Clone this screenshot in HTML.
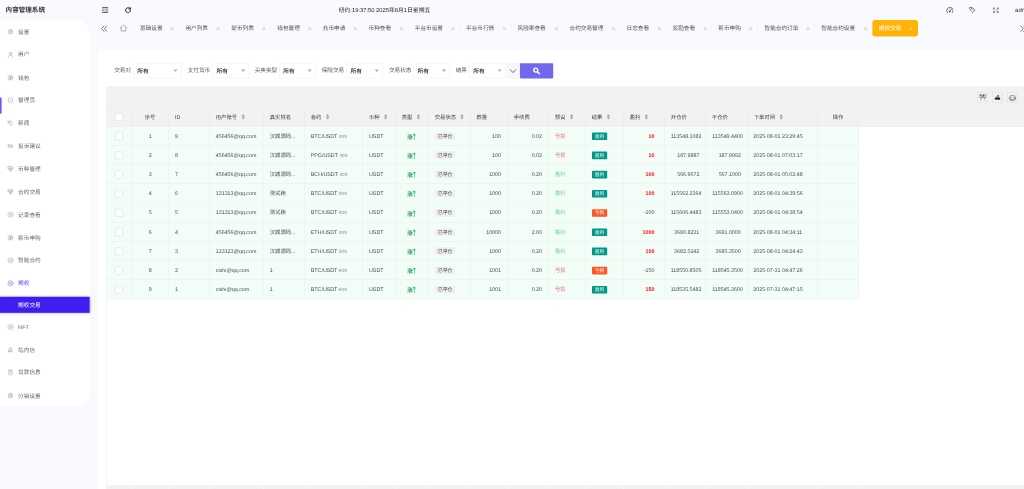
<!DOCTYPE html>
<html lang="zh-CN"><head><meta charset="utf-8"><title>内容管理系统</title>
<style>
html,body{margin:0;padding:0;width:1024px;height:489px;overflow:hidden;background:#f8fafe;}
#app{position:absolute;left:0;top:0;width:2560px;height:1222.5px;transform:scale(0.4);transform-origin:0 0;overflow:hidden;will-change:opacity;
font-family:"Liberation Sans","Noto Sans CJK SC",sans-serif;text-rendering:geometricPrecision;}
.t{position:absolute;white-space:nowrap;}
.b{position:absolute;}
</style></head><body><div id="app">
<div class="t" style="left:14.00px;top:12.25px;line-height:25.00px;font-size:16.40px;color:#333;font-weight:bold;">内容管理系统</div>
<div class="b" style="left:0.00px;top:50.00px;width:224.00px;height:966.00px;background:#fff;border-radius:0 33.75px 33.75px 0;"></div>
<svg class="b" style="left:17.75px;top:71.38px;width:16.50px;height:16.50px;stroke:#8a8894;stroke-width:1.6;" viewBox="0 0 24 24" fill="none" stroke-linecap="round" stroke-linejoin="round"><circle cx="12" cy="12" r="3.2"/><path d="M12 2.5l2 2.6 3.2-.6.9 3.1 3 1.3-1.2 3.1 1.2 3.1-3 1.3-.9 3.1-3.2-.6-2 2.6-2-2.6-3.2.6-.9-3.1-3-1.3 1.2-3.1-1.2-3.1 3-1.3.9-3.1 3.2.6z"/></svg>
<div class="t" style="left:45.25px;top:67.62px;line-height:25.00px;font-size:14.12px;color:#696772;font-weight:normal;">设置</div>
<svg class="b" style="left:17.75px;top:128.00px;width:16.50px;height:16.50px;stroke:#8a8894;stroke-width:1.6;" viewBox="0 0 24 24" fill="none" stroke-linecap="round" stroke-linejoin="round"><circle cx="12" cy="8" r="4.5"/><path d="M4 21c.8-4.6 3.8-7 8-7s7.200 2.400 8 7"/></svg>
<div class="t" style="left:45.25px;top:124.25px;line-height:25.00px;font-size:14.12px;color:#696772;font-weight:normal;">用户</div>
<svg class="b" style="left:17.75px;top:185.50px;width:16.50px;height:16.50px;stroke:#8a8894;stroke-width:1.6;" viewBox="0 0 24 24" fill="none" stroke-linecap="round" stroke-linejoin="round"><circle cx="12" cy="12" r="9"/><path d="M9 7l3 4 3-4M12 11v7M9 12.500h6M9 15.500h6"/></svg>
<div class="t" style="left:45.25px;top:181.75px;line-height:25.00px;font-size:14.12px;color:#696772;font-weight:normal;">钱包</div>
<svg class="b" style="left:17.75px;top:242.62px;width:16.50px;height:16.50px;stroke:#8a8894;stroke-width:1.6;" viewBox="0 0 24 24" fill="none" stroke-linecap="round" stroke-linejoin="round"><path d="M12 2.500l8 3v6.500c0 5-3.500 8-8 9.500-4.500-1.500-8-4.500-8-9.500V5.500z"/><path d="M8 11c1 2 7 2 8 0"/></svg>
<div class="t" style="left:45.25px;top:238.88px;line-height:25.00px;font-size:14.12px;color:#696772;font-weight:normal;">管理员</div>
<svg class="b" style="left:17.75px;top:299.75px;width:16.50px;height:16.50px;stroke:#8a8894;stroke-width:1.6;" viewBox="0 0 24 24" fill="none" stroke-linecap="round" stroke-linejoin="round"><path d="M3 4.500l9-1.500 9.500 9.500-8 8L4 11z" /><circle cx="8.500" cy="8.500" r="1.600"/></svg>
<div class="t" style="left:45.25px;top:296.00px;line-height:25.00px;font-size:14.12px;color:#696772;font-weight:normal;">新闻</div>
<svg class="b" style="left:17.75px;top:357.00px;width:16.50px;height:16.50px;stroke:#8a8894;stroke-width:1.6;" viewBox="0 0 24 24" fill="none" stroke-linecap="round" stroke-linejoin="round"><rect x="2.500" y="8" width="19" height="8" rx="2" stroke-width="1.500"/><path d="M7 12h.1M12 12h.1M17 12h.1" stroke-width="2.400"/></svg>
<div class="t" style="left:45.25px;top:353.25px;line-height:25.00px;font-size:14.12px;color:#696772;font-weight:normal;">投诉建议</div>
<svg class="b" style="left:17.75px;top:414.00px;width:16.50px;height:16.50px;stroke:#8a8894;stroke-width:1.6;" viewBox="0 0 24 24" fill="none" stroke-linecap="round" stroke-linejoin="round"><path d="M6 3h12l4 6-10 12L2 9z"/><path d="M2 9h20M9 9l3 11 3-11"/></svg>
<div class="t" style="left:45.25px;top:410.25px;line-height:25.00px;font-size:14.12px;color:#696772;font-weight:normal;">币种管理</div>
<svg class="b" style="left:17.75px;top:471.00px;width:16.50px;height:16.50px;stroke:#8a8894;stroke-width:1.6;" viewBox="0 0 24 24" fill="none" stroke-linecap="round" stroke-linejoin="round"><path d="M6 3h12l4 6-10 12L2 9z"/><path d="M2 9h20M9 9l3 11 3-11"/></svg>
<div class="t" style="left:45.25px;top:467.25px;line-height:25.00px;font-size:14.12px;color:#696772;font-weight:normal;">合约交易</div>
<svg class="b" style="left:17.75px;top:528.25px;width:16.50px;height:16.50px;stroke:#8a8894;stroke-width:1.6;" viewBox="0 0 24 24" fill="none" stroke-linecap="round" stroke-linejoin="round"><circle cx="12" cy="12" r="9.500" stroke-width="1.500"/><path d="M15 9c-2.500-1.500-5.500 0-5.500 3s3 4.500 5.500 3M7.500 12h4.500" stroke-width="1.400"/></svg>
<div class="t" style="left:45.25px;top:524.50px;line-height:25.00px;font-size:14.12px;color:#696772;font-weight:normal;">记录查看</div>
<svg class="b" style="left:17.75px;top:585.50px;width:16.50px;height:16.50px;stroke:#8a8894;stroke-width:1.6;" viewBox="0 0 24 24" fill="none" stroke-linecap="round" stroke-linejoin="round"><circle cx="12" cy="12" r="9"/><path d="M9 7l3 4 3-4M12 11v7M9 12.500h6M9 15.500h6"/></svg>
<div class="t" style="left:45.25px;top:581.75px;line-height:25.00px;font-size:14.12px;color:#696772;font-weight:normal;">新币申购</div>
<svg class="b" style="left:17.75px;top:642.75px;width:16.50px;height:16.50px;stroke:#8a8894;stroke-width:1.6;" viewBox="0 0 24 24" fill="none" stroke-linecap="round" stroke-linejoin="round"><circle cx="12" cy="12" r="9.500" stroke-width="1.500"/><path d="M15 9c-2.500-1.500-5.500 0-5.500 3s3 4.500 5.500 3M7.500 12h4.500" stroke-width="1.400"/></svg>
<div class="t" style="left:45.25px;top:639.00px;line-height:25.00px;font-size:14.12px;color:#696772;font-weight:normal;">智能合约</div>
<svg class="b" style="left:17.75px;top:700.12px;width:16.50px;height:16.50px;stroke:#5a3df0;stroke-width:1.6;" viewBox="0 0 24 24" fill="none" stroke-linecap="round" stroke-linejoin="round"><circle cx="12" cy="12" r="9.500" stroke-width="1.500"/><path d="M15 9c-2.500-1.500-5.500 0-5.500 3s3 4.500 5.500 3M7.500 12h4.500" stroke-width="1.400"/></svg>
<div class="t" style="left:45.25px;top:696.38px;line-height:25.00px;font-size:14.12px;color:#5a3df0;font-weight:normal;">期权</div>
<svg class="b" style="left:17.75px;top:808.88px;width:16.50px;height:16.50px;stroke:#8a8894;stroke-width:1.6;" viewBox="0 0 24 24" fill="none" stroke-linecap="round" stroke-linejoin="round"><circle cx="12" cy="12" r="9.500" stroke-width="1.500"/><path d="M15 9c-2.500-1.500-5.500 0-5.500 3s3 4.500 5.500 3M7.500 12h4.500" stroke-width="1.400"/></svg>
<div class="t" style="left:45.25px;top:805.12px;line-height:25.00px;font-size:14.12px;color:#696772;font-weight:normal;">NFT</div>
<svg class="b" style="left:17.75px;top:866.00px;width:16.50px;height:16.50px;stroke:#6f6d78;stroke-width:1.6;" viewBox="0 0 24 24" fill="none" stroke-linecap="round" stroke-linejoin="round"><path d="M5 17h14l-2-3V10a5 5 0 0 0-10 0v4zM10 20h4"/></svg>
<div class="t" style="left:45.25px;top:862.25px;line-height:25.00px;font-size:14.12px;color:#696772;font-weight:normal;">站内信</div>
<svg class="b" style="left:17.75px;top:923.00px;width:16.50px;height:16.50px;stroke:#a5a3ad;stroke-width:1.6;" viewBox="0 0 24 24" fill="none" stroke-linecap="round" stroke-linejoin="round"><rect x="5" y="4" width="14" height="17" rx="1.500"/><path d="M9 3h6v3H9zM9 11h6M9 15h6"/></svg>
<div class="t" style="left:45.25px;top:919.25px;line-height:25.00px;font-size:14.12px;color:#696772;font-weight:normal;">贷款信息</div>
<svg class="b" style="left:17.75px;top:980.50px;width:16.50px;height:16.50px;stroke:#8a8894;stroke-width:1.6;" viewBox="0 0 24 24" fill="none" stroke-linecap="round" stroke-linejoin="round"><circle cx="12" cy="12" r="3.2"/><path d="M12 2.5l2 2.6 3.2-.6.9 3.1 3 1.3-1.2 3.1 1.2 3.1-3 1.3-.9 3.1-3.2-.6-2 2.6-2-2.6-3.2.6-.9-3.1-3-1.3 1.2-3.1-1.2-3.1 3-1.3.9-3.1 3.2.6z"/></svg>
<div class="t" style="left:45.25px;top:976.75px;line-height:25.00px;font-size:14.12px;color:#696772;font-weight:normal;">分销设置</div>
<div class="b" style="left:0.00px;top:244.38px;width:3.75px;height:40.00px;background:#6f55f5;"></div>
<div class="b" style="left:0.00px;top:742.25px;width:224.38px;height:40.00px;background:#3f1ff0;box-shadow:0 0 6.00px rgba(63,31,240,.45);"></div>
<div class="t" style="left:45.25px;top:750.00px;line-height:25.00px;font-size:14.12px;color:#fff;font-weight:normal;">期权交易</div>
<svg class="b" style="left:253.75px;top:16.00px;width:18.00px;height:18.00px;stroke:#222;" viewBox="0 0 24 24" fill="none" stroke-linecap="round" stroke-linejoin="round"><path d="M2 4.500h20M2 19.500h20" stroke-width="3" stroke-linecap="butt"/><path d="M10.500 12h11.500" stroke-width="2.200" stroke-linecap="butt"/><path d="M3 9.200v5.600l3.800-2.800z" fill="#222" stroke-width="0.500"/></svg>
<svg class="b" style="left:311.00px;top:16.25px;width:18.50px;height:18.50px;stroke:#222;" viewBox="0 0 24 24" fill="none" stroke-linecap="round" stroke-linejoin="round"><path d="M20 12.500a8 8 0 1 1-3-6.700" stroke-width="3.200"/><path d="M20.500 2.500v7h-7z" fill="#222" stroke-width="1"/></svg>
<div class="t" style="left:711.25px;width:500.00px;text-align:center;top:12.50px;line-height:25.00px;font-size:14.50px;color:#222;font-weight:normal;">纽约:19:37:50 2025年8月1日星期五</div>
<svg class="b" style="left:2364.62px;top:15.50px;width:19.50px;height:19.50px;stroke:#444;" viewBox="0 0 24 24" fill="none" stroke-linecap="round" stroke-linejoin="round"><path d="M4.500 19.500A10 10 0 1 1 19.500 19.500" stroke-width="2.200"/><path d="M11.500 15.500L17 9" stroke-width="2.200"/><circle cx="11" cy="16" r="1.800" fill="#333" stroke-width="1"/><path d="M7 11l.1.100M12 7.500v.1" stroke-width="1.800"/></svg>
<svg class="b" style="left:2422.25px;top:16.00px;width:18.00px;height:18.00px;stroke:#444;" viewBox="0 0 24 24" fill="none" stroke-linecap="round" stroke-linejoin="round"><path d="M3 4l8-1 10 10-7.500 7.500L3.500 11z" stroke-width="2"/><path d="M6.500 3.500L17 14" stroke-width="1.500"/><circle cx="8" cy="8" r="1.300"/></svg>
<svg class="b" style="left:2480.88px;top:17.75px;width:17.00px;height:15.00px;stroke:#505050;" viewBox="0 0 24 24" preserveAspectRatio="none" fill="none" stroke-linecap="round" stroke-linejoin="round"><path d="M3 8V3h5M16 3h5v5M21 16v5h-5M8 21H3v-5" stroke-width="2.200"/><path d="M4 4l5 5M20 4l-5 5M20 20l-5-5M4 20l5-5" stroke-width="2"/></svg>
<div class="t" style="left:2537.75px;top:13.00px;line-height:25.00px;font-size:15.00px;color:#333;font-weight:normal;">admin</div>
<svg class="b" style="left:251.50px;top:62.50px;width:17.00px;height:17.25px;stroke:#3a3a3a;" viewBox="0 0 24 24" preserveAspectRatio="none" fill="none" stroke-linecap="round" stroke-linejoin="round"><path d="M11 2.500l-8 9.500 8 9.500M21 2.500l-8 9.500 8 9.500" stroke-width="2.300"/></svg>
<div class="b" style="left:280.25px;top:50.00px;width:1.00px;height:41.00px;background:#f0f1f6;"></div>
<svg class="b" style="left:299.25px;top:60.12px;width:19.50px;height:19.50px;stroke:#6a6a6a;" viewBox="0 0 24 24" fill="none" stroke-linecap="round" stroke-linejoin="round"><path d="M1.500 12.500L12 3l10.500 9.500" stroke-width="1.600"/><path d="M5 11.500V21.500h14V11.500" stroke-width="1.600"/></svg>
<div class="b" style="left:333.00px;top:50.00px;width:1.00px;height:41.00px;background:#f0f1f6;"></div>
<div class="t" style="left:350.00px;top:58.50px;line-height:25.00px;font-size:14.12px;color:#54525c;font-weight:normal;">基础设置</div>
<div class="t" style="left:180.00px;width:500.00px;text-align:center;top:59.38px;line-height:25.00px;font-size:18.00px;color:#c6c6ce;font-weight:normal;">×</div>
<div class="b" style="left:446.50px;top:50.00px;width:1.00px;height:41.00px;background:#f0f1f6;"></div>
<div class="t" style="left:463.50px;top:58.50px;line-height:25.00px;font-size:14.12px;color:#54525c;font-weight:normal;">用户列表</div>
<div class="t" style="left:295.00px;width:500.00px;text-align:center;top:59.38px;line-height:25.00px;font-size:18.00px;color:#c6c6ce;font-weight:normal;">×</div>
<div class="b" style="left:561.12px;top:50.00px;width:1.00px;height:41.00px;background:#f0f1f6;"></div>
<div class="t" style="left:578.12px;top:58.50px;line-height:25.00px;font-size:14.12px;color:#54525c;font-weight:normal;">提币列表</div>
<div class="t" style="left:409.38px;width:500.00px;text-align:center;top:59.38px;line-height:25.00px;font-size:18.00px;color:#c6c6ce;font-weight:normal;">×</div>
<div class="b" style="left:676.12px;top:50.00px;width:1.00px;height:41.00px;background:#f0f1f6;"></div>
<div class="t" style="left:693.12px;top:58.50px;line-height:25.00px;font-size:14.12px;color:#54525c;font-weight:normal;">钱包管理</div>
<div class="t" style="left:523.75px;width:500.00px;text-align:center;top:59.38px;line-height:25.00px;font-size:18.00px;color:#c6c6ce;font-weight:normal;">×</div>
<div class="b" style="left:789.88px;top:50.00px;width:1.00px;height:41.00px;background:#f0f1f6;"></div>
<div class="t" style="left:806.88px;top:58.50px;line-height:25.00px;font-size:14.12px;color:#54525c;font-weight:normal;">充币申请</div>
<div class="t" style="left:638.00px;width:500.00px;text-align:center;top:59.38px;line-height:25.00px;font-size:18.00px;color:#c6c6ce;font-weight:normal;">×</div>
<div class="b" style="left:904.25px;top:50.00px;width:1.00px;height:41.00px;background:#f0f1f6;"></div>
<div class="t" style="left:921.25px;top:58.50px;line-height:25.00px;font-size:14.12px;color:#54525c;font-weight:normal;">币种查看</div>
<div class="t" style="left:752.50px;width:500.00px;text-align:center;top:59.38px;line-height:25.00px;font-size:18.00px;color:#c6c6ce;font-weight:normal;">×</div>
<div class="b" style="left:1019.88px;top:50.00px;width:1.00px;height:41.00px;background:#f0f1f6;"></div>
<div class="t" style="left:1036.88px;top:58.50px;line-height:25.00px;font-size:14.12px;color:#54525c;font-weight:normal;">平台币设置</div>
<div class="t" style="left:882.50px;width:500.00px;text-align:center;top:59.38px;line-height:25.00px;font-size:18.00px;color:#c6c6ce;font-weight:normal;">×</div>
<div class="b" style="left:1148.00px;top:50.00px;width:1.00px;height:41.00px;background:#f0f1f6;"></div>
<div class="t" style="left:1165.00px;top:58.50px;line-height:25.00px;font-size:14.12px;color:#54525c;font-weight:normal;">平台币行情</div>
<div class="t" style="left:1010.62px;width:500.00px;text-align:center;top:59.38px;line-height:25.00px;font-size:18.00px;color:#c6c6ce;font-weight:normal;">×</div>
<div class="b" style="left:1276.75px;top:50.00px;width:1.00px;height:41.00px;background:#f0f1f6;"></div>
<div class="t" style="left:1293.75px;top:58.50px;line-height:25.00px;font-size:14.12px;color:#54525c;font-weight:normal;">风险率查看</div>
<div class="t" style="left:1140.62px;width:500.00px;text-align:center;top:59.38px;line-height:25.00px;font-size:18.00px;color:#c6c6ce;font-weight:normal;">×</div>
<div class="b" style="left:1406.75px;top:50.00px;width:1.00px;height:41.00px;background:#f0f1f6;"></div>
<div class="t" style="left:1423.75px;top:58.50px;line-height:25.00px;font-size:14.12px;color:#54525c;font-weight:normal;">合约交易管理</div>
<div class="t" style="left:1283.12px;width:500.00px;text-align:center;top:59.38px;line-height:25.00px;font-size:18.00px;color:#c6c6ce;font-weight:normal;">×</div>
<div class="b" style="left:1549.25px;top:50.00px;width:1.00px;height:41.00px;background:#f0f1f6;"></div>
<div class="t" style="left:1566.25px;top:58.50px;line-height:25.00px;font-size:14.12px;color:#54525c;font-weight:normal;">日志查看</div>
<div class="t" style="left:1398.12px;width:500.00px;text-align:center;top:59.38px;line-height:25.00px;font-size:18.00px;color:#c6c6ce;font-weight:normal;">×</div>
<div class="b" style="left:1664.25px;top:50.00px;width:1.00px;height:41.00px;background:#f0f1f6;"></div>
<div class="t" style="left:1681.25px;top:58.50px;line-height:25.00px;font-size:14.12px;color:#54525c;font-weight:normal;">奖励查看</div>
<div class="t" style="left:1512.50px;width:500.00px;text-align:center;top:59.38px;line-height:25.00px;font-size:18.00px;color:#c6c6ce;font-weight:normal;">×</div>
<div class="b" style="left:1778.62px;top:50.00px;width:1.00px;height:41.00px;background:#f0f1f6;"></div>
<div class="t" style="left:1795.62px;top:58.50px;line-height:25.00px;font-size:14.12px;color:#54525c;font-weight:normal;">新币申购</div>
<div class="t" style="left:1626.88px;width:500.00px;text-align:center;top:59.38px;line-height:25.00px;font-size:18.00px;color:#c6c6ce;font-weight:normal;">×</div>
<div class="b" style="left:1894.25px;top:50.00px;width:1.00px;height:41.00px;background:#f0f1f6;"></div>
<div class="t" style="left:1911.25px;top:58.50px;line-height:25.00px;font-size:14.12px;color:#54525c;font-weight:normal;">智能合约订单</div>
<div class="t" style="left:1770.00px;width:500.00px;text-align:center;top:59.38px;line-height:25.00px;font-size:18.00px;color:#c6c6ce;font-weight:normal;">×</div>
<div class="b" style="left:2036.12px;top:50.00px;width:1.00px;height:41.00px;background:#f0f1f6;"></div>
<div class="t" style="left:2053.12px;top:58.50px;line-height:25.00px;font-size:14.12px;color:#54525c;font-weight:normal;">智能合约设置</div>
<div class="t" style="left:1913.75px;width:500.00px;text-align:center;top:59.38px;line-height:25.00px;font-size:18.00px;color:#c6c6ce;font-weight:normal;">×</div>
<div class="b" style="left:2181.25px;top:49.75px;width:114.00px;height:41.00px;background:#ffb405;border-radius:6.50px;"></div>
<div class="t" style="left:2196.88px;top:58.50px;line-height:25.00px;font-size:14.12px;color:#fff;font-weight:normal;">期权交易</div>
<div class="t" style="left:2028.12px;width:500.00px;text-align:center;top:59.38px;line-height:25.00px;font-size:18.00px;color:#ffd98a;font-weight:normal;">×</div>
<div class="b" style="left:2535.75px;top:50.00px;width:1.00px;height:41.00px;background:#f0f1f6;"></div>
<svg class="b" style="left:2549.50px;top:63.00px;width:17.00px;height:17.25px;stroke:#3a3a3a;" viewBox="0 0 24 24" preserveAspectRatio="none" fill="none" stroke-linecap="round" stroke-linejoin="round"><path d="M3 2.500l8 9.500-8 9.500M13 2.500l8 9.500-8 9.500" stroke-width="2.300"/></svg>
<div class="b" style="left:245.00px;top:126.75px;width:2330.00px;height:1110.75px;background:#fff;border-radius:5.00px;"></div>
<div class="t" style="left:285.62px;top:163.88px;line-height:25.00px;font-size:14.00px;color:#5c5c5c;font-weight:normal;">交易对</div>
<div class="b" style="left:333.12px;top:158.12px;width:121.25px;height:37.50px;background:#fff;border:1.00px solid #e9e9ee;border-radius:2.50px;box-sizing:border-box;"></div>
<div class="t" style="left:343.12px;top:166.50px;line-height:25.00px;font-size:14.38px;color:#222;font-weight:500;">所有</div>
<div class="b" style="left:434.12px;top:173.62px;border-left:5.00px solid transparent;border-right:5.00px solid transparent;border-top:6.50px solid #adadad;"></div>
<div class="t" style="left:469.38px;top:163.88px;line-height:25.00px;font-size:14.00px;color:#5c5c5c;font-weight:normal;">支付货币</div>
<div class="b" style="left:531.25px;top:158.12px;width:91.88px;height:37.50px;background:#fff;border:1.00px solid #e9e9ee;border-radius:2.50px;box-sizing:border-box;"></div>
<div class="t" style="left:541.25px;top:166.50px;line-height:25.00px;font-size:14.38px;color:#222;font-weight:500;">所有</div>
<div class="b" style="left:602.88px;top:173.62px;border-left:5.00px solid transparent;border-right:5.00px solid transparent;border-top:6.50px solid #adadad;"></div>
<div class="t" style="left:636.75px;top:163.88px;line-height:25.00px;font-size:14.00px;color:#5c5c5c;font-weight:normal;">买卖类型</div>
<div class="b" style="left:698.12px;top:158.12px;width:90.62px;height:37.50px;background:#fff;border:1.00px solid #e9e9ee;border-radius:2.50px;box-sizing:border-box;"></div>
<div class="t" style="left:708.12px;top:166.50px;line-height:25.00px;font-size:14.38px;color:#222;font-weight:500;">所有</div>
<div class="b" style="left:768.50px;top:173.62px;border-left:5.00px solid transparent;border-right:5.00px solid transparent;border-top:6.50px solid #adadad;"></div>
<div class="t" style="left:804.38px;top:163.88px;line-height:25.00px;font-size:14.00px;color:#5c5c5c;font-weight:normal;">保险交易</div>
<div class="b" style="left:866.25px;top:158.12px;width:90.62px;height:37.50px;background:#fff;border:1.00px solid #e9e9ee;border-radius:2.50px;box-sizing:border-box;"></div>
<div class="t" style="left:876.25px;top:166.50px;line-height:25.00px;font-size:14.38px;color:#222;font-weight:500;">所有</div>
<div class="b" style="left:936.62px;top:173.62px;border-left:5.00px solid transparent;border-right:5.00px solid transparent;border-top:6.50px solid #adadad;"></div>
<div class="t" style="left:972.50px;top:163.88px;line-height:25.00px;font-size:14.00px;color:#5c5c5c;font-weight:normal;">交易状态</div>
<div class="b" style="left:1033.75px;top:158.12px;width:91.25px;height:37.50px;background:#fff;border:1.00px solid #e9e9ee;border-radius:2.50px;box-sizing:border-box;"></div>
<div class="t" style="left:1043.75px;top:166.50px;line-height:25.00px;font-size:14.38px;color:#222;font-weight:500;">所有</div>
<div class="b" style="left:1104.75px;top:173.62px;border-left:5.00px solid transparent;border-right:5.00px solid transparent;border-top:6.50px solid #adadad;"></div>
<div class="t" style="left:1139.38px;top:163.88px;line-height:25.00px;font-size:14.00px;color:#5c5c5c;font-weight:normal;">结果</div>
<div class="b" style="left:1173.12px;top:158.12px;width:90.62px;height:37.50px;background:#fff;border:1.00px solid #e9e9ee;border-radius:2.50px;box-sizing:border-box;"></div>
<div class="t" style="left:1183.12px;top:166.50px;line-height:25.00px;font-size:14.38px;color:#222;font-weight:500;">所有</div>
<div class="b" style="left:1243.50px;top:173.62px;border-left:5.00px solid transparent;border-right:5.00px solid transparent;border-top:6.50px solid #adadad;"></div>
<div class="b" style="left:1268.50px;top:158.12px;width:32.50px;height:37.50px;background:#f6f8fd;border:1.00px solid #e9e9ee;border-radius:2.50px;box-sizing:border-box;"></div>
<svg class="b" style="left:1273.00px;top:168.12px;width:19.00px;height:19.00px;stroke:#333;" viewBox="0 0 24 24" fill="none" stroke-linecap="round" stroke-linejoin="round"><path d="M3 7.500l9 9.500 9-9.500" stroke-width="2.200"/></svg>
<div class="b" style="left:1300.00px;top:157.50px;width:83.12px;height:38.25px;background:#7367f0;border-radius:2.00px;"></div>
<svg class="b" style="left:1331.00px;top:167.38px;width:20.00px;height:20.00px;stroke:#fff;" viewBox="0 0 24 24" fill="none" stroke-linecap="round" stroke-linejoin="round"><circle cx="10" cy="10" r="6" stroke-width="4.200"/><path d="M15.500 15.500l5.500 5.500" stroke-width="4.800"/></svg>
<div class="b" style="left:265.62px;top:215.88px;width:2309.38px;height:52.88px;background:#f2f2f2;"></div>
<div class="b" style="left:2443.00px;top:230.50px;width:26.75px;height:26.75px;background:transparent;border:1.00px solid #d8d8d8;box-sizing:border-box;"></div>
<div class="b" style="left:2480.25px;top:230.50px;width:26.75px;height:26.75px;background:transparent;border:1.00px solid #d8d8d8;box-sizing:border-box;"></div>
<div class="b" style="left:2517.50px;top:230.50px;width:26.75px;height:26.75px;background:transparent;border:1.00px solid #d8d8d8;box-sizing:border-box;"></div>
<svg class="b" style="left:2447.50px;top:235.25px;width:18.50px;height:18.50px;" viewBox="0 0 24 24" fill="none" stroke-linecap="round" stroke-linejoin="round"><rect x="2" y="3" width="9" height="8" rx="1.200" stroke-width="1.900" stroke="#333"/><rect x="13" y="3" width="9" height="8" rx="1.200" stroke-width="1.900" stroke="#333"/><path d="M6.500 14v7M17.500 14v7" stroke-width="5" stroke="#ababab" stroke-dasharray="2.600 1.400" stroke-linecap="butt"/></svg>
<svg class="b" style="left:2485.62px;top:235.75px;width:16.00px;height:16.00px;stroke:#222;" viewBox="0 0 24 24" fill="none" stroke-linecap="round" stroke-linejoin="round"><path d="M3 13h18v6H3z" fill="#222" stroke-width="1.500"/><path d="M7 13l3-7 5 2v5" stroke-width="2"/><path d="M12 4l4-1v3z" fill="#222" stroke-width="1"/></svg>
<svg class="b" style="left:2521.75px;top:235.50px;width:18.50px;height:18.50px;" viewBox="0 0 24 24" fill="none" stroke-linecap="round" stroke-linejoin="round"><ellipse cx="12" cy="12" rx="10.200" ry="8.800" stroke-width="1.700" stroke="#444"/><path d="M5 11.500h14v5H5z" stroke-width="1.500" stroke="#555" fill="#fff"/></svg>
<div class="b" style="left:265.62px;top:268.25px;width:2309.38px;height:48.50px;background:#f2f2f2;"></div>
<div class="b" style="left:265.62px;top:316.75px;width:1881.25px;height:431.37px;background:#f3fdf8;"></div>
<div class="b" style="left:265.00px;top:216.25px;width:1.25px;height:1021.25px;background:#e9e9e9;"></div>
<div class="b" style="left:265.62px;top:267.75px;width:2309.38px;height:1.00px;background:#e8e8e8;"></div>
<div class="b" style="left:265.62px;top:315.12px;width:2309.38px;height:1.00px;background:#e9e9e9;"></div>
<div class="b" style="left:265.62px;top:363.12px;width:1881.25px;height:1.00px;background:#e4eee9;"></div>
<div class="b" style="left:265.62px;top:411.13px;width:1881.25px;height:1.00px;background:#e4eee9;"></div>
<div class="b" style="left:265.62px;top:459.12px;width:1881.25px;height:1.00px;background:#e4eee9;"></div>
<div class="b" style="left:265.62px;top:507.13px;width:1881.25px;height:1.00px;background:#e4eee9;"></div>
<div class="b" style="left:265.62px;top:555.12px;width:1881.25px;height:1.00px;background:#e4eee9;"></div>
<div class="b" style="left:265.62px;top:603.12px;width:1881.25px;height:1.00px;background:#e4eee9;"></div>
<div class="b" style="left:265.62px;top:651.12px;width:1881.25px;height:1.00px;background:#e4eee9;"></div>
<div class="b" style="left:265.62px;top:699.13px;width:1881.25px;height:1.00px;background:#e4eee9;"></div>
<div class="b" style="left:265.62px;top:747.12px;width:1881.25px;height:1.00px;background:#e4eee9;"></div>
<div class="b" style="left:328.25px;top:268.25px;width:1.00px;height:48.50px;background:#e6e6e6;"></div>
<div class="b" style="left:328.25px;top:316.75px;width:1.00px;height:431.37px;background:#e4eee9;"></div>
<div class="b" style="left:421.38px;top:268.25px;width:1.00px;height:48.50px;background:#e6e6e6;"></div>
<div class="b" style="left:421.38px;top:316.75px;width:1.00px;height:431.37px;background:#e4eee9;"></div>
<div class="b" style="left:523.25px;top:268.25px;width:1.00px;height:48.50px;background:#e6e6e6;"></div>
<div class="b" style="left:523.25px;top:316.75px;width:1.00px;height:431.37px;background:#e4eee9;"></div>
<div class="b" style="left:658.25px;top:268.25px;width:1.00px;height:48.50px;background:#e6e6e6;"></div>
<div class="b" style="left:658.25px;top:316.75px;width:1.00px;height:431.37px;background:#e4eee9;"></div>
<div class="b" style="left:760.75px;top:268.25px;width:1.00px;height:48.50px;background:#e6e6e6;"></div>
<div class="b" style="left:760.75px;top:316.75px;width:1.00px;height:431.37px;background:#e4eee9;"></div>
<div class="b" style="left:906.38px;top:268.25px;width:1.00px;height:48.50px;background:#e6e6e6;"></div>
<div class="b" style="left:906.38px;top:316.75px;width:1.00px;height:431.37px;background:#e4eee9;"></div>
<div class="b" style="left:988.25px;top:268.25px;width:1.00px;height:48.50px;background:#e6e6e6;"></div>
<div class="b" style="left:988.25px;top:316.75px;width:1.00px;height:431.37px;background:#e4eee9;"></div>
<div class="b" style="left:1070.75px;top:268.25px;width:1.00px;height:48.50px;background:#e6e6e6;"></div>
<div class="b" style="left:1070.75px;top:316.75px;width:1.00px;height:431.37px;background:#e4eee9;"></div>
<div class="b" style="left:1175.12px;top:268.25px;width:1.00px;height:48.50px;background:#e6e6e6;"></div>
<div class="b" style="left:1175.12px;top:316.75px;width:1.00px;height:431.37px;background:#e4eee9;"></div>
<div class="b" style="left:1268.25px;top:268.25px;width:1.00px;height:48.50px;background:#e6e6e6;"></div>
<div class="b" style="left:1268.25px;top:316.75px;width:1.00px;height:431.37px;background:#e4eee9;"></div>
<div class="b" style="left:1370.75px;top:268.25px;width:1.00px;height:48.50px;background:#e6e6e6;"></div>
<div class="b" style="left:1370.75px;top:316.75px;width:1.00px;height:431.37px;background:#e4eee9;"></div>
<div class="b" style="left:1463.25px;top:268.25px;width:1.00px;height:48.50px;background:#e6e6e6;"></div>
<div class="b" style="left:1463.25px;top:316.75px;width:1.00px;height:431.37px;background:#e4eee9;"></div>
<div class="b" style="left:1558.25px;top:268.25px;width:1.00px;height:48.50px;background:#e6e6e6;"></div>
<div class="b" style="left:1558.25px;top:316.75px;width:1.00px;height:431.37px;background:#e4eee9;"></div>
<div class="b" style="left:1661.00px;top:268.25px;width:1.00px;height:48.50px;background:#e6e6e6;"></div>
<div class="b" style="left:1661.00px;top:316.75px;width:1.00px;height:431.37px;background:#e4eee9;"></div>
<div class="b" style="left:1763.50px;top:268.25px;width:1.00px;height:48.50px;background:#e6e6e6;"></div>
<div class="b" style="left:1763.50px;top:316.75px;width:1.00px;height:431.37px;background:#e4eee9;"></div>
<div class="b" style="left:1868.25px;top:268.25px;width:1.00px;height:48.50px;background:#e6e6e6;"></div>
<div class="b" style="left:1868.25px;top:316.75px;width:1.00px;height:431.37px;background:#e4eee9;"></div>
<div class="b" style="left:2043.25px;top:268.25px;width:1.00px;height:48.50px;background:#e6e6e6;"></div>
<div class="b" style="left:2043.25px;top:316.75px;width:1.00px;height:431.37px;background:#e4eee9;"></div>
<div class="b" style="left:2146.38px;top:268.25px;width:1.00px;height:48.50px;background:#e6e6e6;"></div>
<div class="b" style="left:2146.38px;top:316.75px;width:1.00px;height:431.37px;background:#e4eee9;"></div>
<div class="t" style="left:125.31px;width:500.00px;text-align:center;top:279.88px;line-height:25.00px;font-size:13.32px;color:#444;font-weight:normal;">序号</div>
<div class="t" style="left:437.50px;top:279.88px;line-height:25.00px;font-size:13.32px;color:#444;font-weight:normal;">ID</div>
<div class="t" style="left:539.38px;top:279.88px;line-height:25.00px;font-size:13.32px;color:#444;font-weight:normal;">用户账号</div>
<div class="b" style="left:603.92px;top:285.12px;border-left:4.25px solid transparent;border-right:4.25px solid transparent;border-bottom:6.25px solid #9c9c9c;"></div><div class="b" style="left:603.92px;top:292.62px;border-left:4.25px solid transparent;border-right:4.25px solid transparent;border-top:6.25px solid #9c9c9c;"></div>
<div class="t" style="left:674.38px;top:279.88px;line-height:25.00px;font-size:13.32px;color:#444;font-weight:normal;">真实姓名</div>
<div class="t" style="left:776.88px;top:279.88px;line-height:25.00px;font-size:13.32px;color:#444;font-weight:normal;">合约</div>
<div class="b" style="left:814.78px;top:285.12px;border-left:4.25px solid transparent;border-right:4.25px solid transparent;border-bottom:6.25px solid #9c9c9c;"></div><div class="b" style="left:814.78px;top:292.62px;border-left:4.25px solid transparent;border-right:4.25px solid transparent;border-top:6.25px solid #9c9c9c;"></div>
<div class="t" style="left:922.50px;top:279.88px;line-height:25.00px;font-size:13.32px;color:#444;font-weight:normal;">币种</div>
<div class="b" style="left:960.40px;top:285.12px;border-left:4.25px solid transparent;border-right:4.25px solid transparent;border-bottom:6.25px solid #9c9c9c;"></div><div class="b" style="left:960.40px;top:292.62px;border-left:4.25px solid transparent;border-right:4.25px solid transparent;border-top:6.25px solid #9c9c9c;"></div>
<div class="t" style="left:1004.38px;top:279.88px;line-height:25.00px;font-size:13.32px;color:#444;font-weight:normal;">类型</div>
<div class="b" style="left:1042.28px;top:285.12px;border-left:4.25px solid transparent;border-right:4.25px solid transparent;border-bottom:6.25px solid #9c9c9c;"></div><div class="b" style="left:1042.28px;top:292.62px;border-left:4.25px solid transparent;border-right:4.25px solid transparent;border-top:6.25px solid #9c9c9c;"></div>
<div class="t" style="left:1086.88px;top:279.88px;line-height:25.00px;font-size:13.32px;color:#444;font-weight:normal;">交易状态</div>
<div class="b" style="left:1151.42px;top:285.12px;border-left:4.25px solid transparent;border-right:4.25px solid transparent;border-bottom:6.25px solid #9c9c9c;"></div><div class="b" style="left:1151.42px;top:292.62px;border-left:4.25px solid transparent;border-right:4.25px solid transparent;border-top:6.25px solid #9c9c9c;"></div>
<div class="t" style="left:1191.25px;top:279.88px;line-height:25.00px;font-size:13.32px;color:#444;font-weight:normal;">数量</div>
<div class="t" style="left:1284.38px;top:279.88px;line-height:25.00px;font-size:13.32px;color:#444;font-weight:normal;">手续费</div>
<div class="t" style="left:1386.88px;top:279.88px;line-height:25.00px;font-size:13.32px;color:#444;font-weight:normal;">预设</div>
<div class="b" style="left:1424.77px;top:285.12px;border-left:4.25px solid transparent;border-right:4.25px solid transparent;border-bottom:6.25px solid #9c9c9c;"></div><div class="b" style="left:1424.77px;top:292.62px;border-left:4.25px solid transparent;border-right:4.25px solid transparent;border-top:6.25px solid #9c9c9c;"></div>
<div class="t" style="left:1479.38px;top:279.88px;line-height:25.00px;font-size:13.32px;color:#444;font-weight:normal;">结果</div>
<div class="b" style="left:1517.27px;top:285.12px;border-left:4.25px solid transparent;border-right:4.25px solid transparent;border-bottom:6.25px solid #9c9c9c;"></div><div class="b" style="left:1517.27px;top:292.62px;border-left:4.25px solid transparent;border-right:4.25px solid transparent;border-top:6.25px solid #9c9c9c;"></div>
<div class="t" style="left:1574.38px;top:279.88px;line-height:25.00px;font-size:13.32px;color:#444;font-weight:normal;">盈利</div>
<div class="b" style="left:1612.27px;top:285.12px;border-left:4.25px solid transparent;border-right:4.25px solid transparent;border-bottom:6.25px solid #9c9c9c;"></div><div class="b" style="left:1612.27px;top:292.62px;border-left:4.25px solid transparent;border-right:4.25px solid transparent;border-top:6.25px solid #9c9c9c;"></div>
<div class="t" style="left:1677.12px;top:279.88px;line-height:25.00px;font-size:13.32px;color:#444;font-weight:normal;">开仓价</div>
<div class="t" style="left:1779.62px;top:279.88px;line-height:25.00px;font-size:13.32px;color:#444;font-weight:normal;">平仓价</div>
<div class="t" style="left:1884.38px;top:279.88px;line-height:25.00px;font-size:13.32px;color:#444;font-weight:normal;">下单时间</div>
<div class="b" style="left:1948.93px;top:285.12px;border-left:4.25px solid transparent;border-right:4.25px solid transparent;border-bottom:6.25px solid #9c9c9c;"></div><div class="b" style="left:1948.93px;top:292.62px;border-left:4.25px solid transparent;border-right:4.25px solid transparent;border-top:6.25px solid #9c9c9c;"></div>
<div class="t" style="left:1845.31px;width:500.00px;text-align:center;top:279.88px;line-height:25.00px;font-size:13.32px;color:#444;font-weight:normal;">操作</div>
<div class="b" style="left:287.75px;top:283.00px;width:18.75px;height:18.75px;background:#fff;border:1.12px solid #cfcfcf;border-radius:2.00px;box-sizing:border-box;"></div>
<div class="b" style="left:287.75px;top:330.75px;width:18.75px;height:18.75px;background:#fff;border:1.12px solid #cfcfcf;border-radius:2.00px;box-sizing:border-box;"></div>
<div class="t" style="left:125.31px;width:500.00px;text-align:center;top:326.75px;line-height:25.00px;font-size:13.32px;color:#4c4c4c;font-weight:normal;">1</div>
<div class="t" style="left:437.50px;top:326.75px;line-height:25.00px;font-size:13.32px;color:#4c4c4c;font-weight:normal;">9</div>
<div class="t" style="left:539.38px;top:326.75px;line-height:25.00px;font-size:13.32px;color:#4c4c4c;font-weight:normal;">456456@qq.com</div>
<div class="t" style="left:674.38px;top:326.75px;line-height:25.00px;font-size:13.32px;color:#4c4c4c;font-weight:normal;">汉城源码...</div>
<div class="t" style="left:776.88px;top:326.75px;line-height:25.00px;font-size:13.32px;color:#4c4c4c;font-weight:normal;">BTC/USDT<span style="font-size:11.25px;color:#8a8a8a">-30S</span></div>
<div class="t" style="left:922.50px;top:326.75px;line-height:25.00px;font-size:13.32px;color:#4c4c4c;font-weight:normal;">USDT</div>
<div class="t" style="left:780.50px;width:500.00px;text-align:center;top:329.50px;line-height:25.00px;font-size:14.00px;color:#1fa267;font-weight:bold;">涨<span style="display:inline-block;font-family:DejaVu Sans,sans-serif;font-weight:normal;font-size:1.1em;line-height:0;margin-left:-0.18em;transform:scaleY(1.45);transform-origin:50% 70%">↑</span></div>
<div class="b" style="left:1087.50px;top:331.00px;width:49.38px;height:18.25px;background:#eeeeee;border-radius:2.00px;"></div>
<div class="t" style="left:1094.75px;top:327.75px;line-height:25.00px;font-size:12.00px;color:#444;font-weight:normal;">已平仓</div>
<div class="t" style="right:1307.50px;top:326.75px;line-height:25.00px;font-size:13.32px;color:#4c4c4c;font-weight:normal;">100</div>
<div class="t" style="right:1205.00px;top:326.75px;line-height:25.00px;font-size:13.32px;color:#4c4c4c;font-weight:normal;">0.02</div>
<div class="t" style="left:1387.25px;top:326.75px;line-height:25.00px;font-size:13.32px;color:#dc7676;font-weight:normal;">亏损</div>
<div class="b" style="left:1480.00px;top:330.75px;width:37.75px;height:19.00px;background:#009688;border-radius:2.00px;"></div>
<div class="t" style="left:1248.88px;width:500.00px;text-align:center;top:327.75px;line-height:25.00px;font-size:12.00px;color:#fff;font-weight:normal;">盈利</div>
<div class="t" style="right:924.12px;top:326.75px;line-height:25.00px;font-size:13.32px;color:#fa0a0a;font-weight:bold;">10</div>
<div class="t" style="left:1465.25px;width:500.00px;text-align:center;top:326.75px;line-height:25.00px;font-size:13.32px;color:#4c4c4c;font-weight:normal;">113548.1082</div>
<div class="t" style="left:1568.88px;width:500.00px;text-align:center;top:326.75px;line-height:25.00px;font-size:13.32px;color:#4c4c4c;font-weight:normal;">113549.4400</div>
<div class="t" style="left:1883.12px;top:326.75px;line-height:25.00px;font-size:13.32px;color:#4c4c4c;font-weight:normal;">2025-08-01 23:29:45</div>
<div class="b" style="left:287.75px;top:378.75px;width:18.75px;height:18.75px;background:#fff;border:1.12px solid #cfcfcf;border-radius:2.00px;box-sizing:border-box;"></div>
<div class="t" style="left:125.31px;width:500.00px;text-align:center;top:374.75px;line-height:25.00px;font-size:13.32px;color:#4c4c4c;font-weight:normal;">2</div>
<div class="t" style="left:437.50px;top:374.75px;line-height:25.00px;font-size:13.32px;color:#4c4c4c;font-weight:normal;">8</div>
<div class="t" style="left:539.38px;top:374.75px;line-height:25.00px;font-size:13.32px;color:#4c4c4c;font-weight:normal;">456456@qq.com</div>
<div class="t" style="left:674.38px;top:374.75px;line-height:25.00px;font-size:13.32px;color:#4c4c4c;font-weight:normal;">汉城源码...</div>
<div class="t" style="left:776.88px;top:374.75px;line-height:25.00px;font-size:13.32px;color:#4c4c4c;font-weight:normal;">PPG/USDT<span style="font-size:11.25px;color:#8a8a8a">-30S</span></div>
<div class="t" style="left:922.50px;top:374.75px;line-height:25.00px;font-size:13.32px;color:#4c4c4c;font-weight:normal;">USDT</div>
<div class="t" style="left:780.50px;width:500.00px;text-align:center;top:377.50px;line-height:25.00px;font-size:14.00px;color:#1fa267;font-weight:bold;">涨<span style="display:inline-block;font-family:DejaVu Sans,sans-serif;font-weight:normal;font-size:1.1em;line-height:0;margin-left:-0.18em;transform:scaleY(1.45);transform-origin:50% 70%">↑</span></div>
<div class="b" style="left:1087.50px;top:379.00px;width:49.38px;height:18.25px;background:#eeeeee;border-radius:2.00px;"></div>
<div class="t" style="left:1094.75px;top:375.75px;line-height:25.00px;font-size:12.00px;color:#444;font-weight:normal;">已平仓</div>
<div class="t" style="right:1307.50px;top:374.75px;line-height:25.00px;font-size:13.32px;color:#4c4c4c;font-weight:normal;">100</div>
<div class="t" style="right:1205.00px;top:374.75px;line-height:25.00px;font-size:13.32px;color:#4c4c4c;font-weight:normal;">0.02</div>
<div class="t" style="left:1387.25px;top:374.75px;line-height:25.00px;font-size:13.32px;color:#dc7676;font-weight:normal;">亏损</div>
<div class="b" style="left:1480.00px;top:378.75px;width:37.75px;height:19.00px;background:#009688;border-radius:2.00px;"></div>
<div class="t" style="left:1248.88px;width:500.00px;text-align:center;top:375.75px;line-height:25.00px;font-size:12.00px;color:#fff;font-weight:normal;">盈利</div>
<div class="t" style="right:924.12px;top:374.75px;line-height:25.00px;font-size:13.32px;color:#fa0a0a;font-weight:bold;">10</div>
<div class="t" style="left:1470.75px;width:500.00px;text-align:center;top:374.75px;line-height:25.00px;font-size:13.32px;color:#4c4c4c;font-weight:normal;">187.9887</div>
<div class="t" style="left:1574.38px;width:500.00px;text-align:center;top:374.75px;line-height:25.00px;font-size:13.32px;color:#4c4c4c;font-weight:normal;">187.9992</div>
<div class="t" style="left:1883.12px;top:374.75px;line-height:25.00px;font-size:13.32px;color:#4c4c4c;font-weight:normal;">2025-08-01 07:03:17</div>
<div class="b" style="left:287.75px;top:426.75px;width:18.75px;height:18.75px;background:#fff;border:1.12px solid #cfcfcf;border-radius:2.00px;box-sizing:border-box;"></div>
<div class="t" style="left:125.31px;width:500.00px;text-align:center;top:422.75px;line-height:25.00px;font-size:13.32px;color:#4c4c4c;font-weight:normal;">3</div>
<div class="t" style="left:437.50px;top:422.75px;line-height:25.00px;font-size:13.32px;color:#4c4c4c;font-weight:normal;">7</div>
<div class="t" style="left:539.38px;top:422.75px;line-height:25.00px;font-size:13.32px;color:#4c4c4c;font-weight:normal;">456456@qq.com</div>
<div class="t" style="left:674.38px;top:422.75px;line-height:25.00px;font-size:13.32px;color:#4c4c4c;font-weight:normal;">汉城源码...</div>
<div class="t" style="left:776.88px;top:422.75px;line-height:25.00px;font-size:13.32px;color:#4c4c4c;font-weight:normal;">BCH/USDT<span style="font-size:11.25px;color:#8a8a8a">-30S</span></div>
<div class="t" style="left:922.50px;top:422.75px;line-height:25.00px;font-size:13.32px;color:#4c4c4c;font-weight:normal;">USDT</div>
<div class="t" style="left:780.50px;width:500.00px;text-align:center;top:425.50px;line-height:25.00px;font-size:14.00px;color:#1fa267;font-weight:bold;">涨<span style="display:inline-block;font-family:DejaVu Sans,sans-serif;font-weight:normal;font-size:1.1em;line-height:0;margin-left:-0.18em;transform:scaleY(1.45);transform-origin:50% 70%">↑</span></div>
<div class="b" style="left:1087.50px;top:427.00px;width:49.38px;height:18.25px;background:#eeeeee;border-radius:2.00px;"></div>
<div class="t" style="left:1094.75px;top:423.75px;line-height:25.00px;font-size:12.00px;color:#444;font-weight:normal;">已平仓</div>
<div class="t" style="right:1307.50px;top:422.75px;line-height:25.00px;font-size:13.32px;color:#4c4c4c;font-weight:normal;">1000</div>
<div class="t" style="right:1205.00px;top:422.75px;line-height:25.00px;font-size:13.32px;color:#4c4c4c;font-weight:normal;">0.20</div>
<div class="t" style="left:1387.25px;top:422.75px;line-height:25.00px;font-size:13.32px;color:#74d19e;font-weight:normal;">盈利</div>
<div class="b" style="left:1480.00px;top:426.75px;width:37.75px;height:19.00px;background:#009688;border-radius:2.00px;"></div>
<div class="t" style="left:1248.88px;width:500.00px;text-align:center;top:423.75px;line-height:25.00px;font-size:12.00px;color:#fff;font-weight:normal;">盈利</div>
<div class="t" style="right:924.12px;top:422.75px;line-height:25.00px;font-size:13.32px;color:#fa0a0a;font-weight:bold;">100</div>
<div class="t" style="left:1470.75px;width:500.00px;text-align:center;top:422.75px;line-height:25.00px;font-size:13.32px;color:#4c4c4c;font-weight:normal;">566.9672</div>
<div class="t" style="left:1574.38px;width:500.00px;text-align:center;top:422.75px;line-height:25.00px;font-size:13.32px;color:#4c4c4c;font-weight:normal;">567.1000</div>
<div class="t" style="left:1883.12px;top:422.75px;line-height:25.00px;font-size:13.32px;color:#4c4c4c;font-weight:normal;">2025-08-01 05:02:48</div>
<div class="b" style="left:287.75px;top:474.75px;width:18.75px;height:18.75px;background:#fff;border:1.12px solid #cfcfcf;border-radius:2.00px;box-sizing:border-box;"></div>
<div class="t" style="left:125.31px;width:500.00px;text-align:center;top:470.75px;line-height:25.00px;font-size:13.32px;color:#4c4c4c;font-weight:normal;">4</div>
<div class="t" style="left:437.50px;top:470.75px;line-height:25.00px;font-size:13.32px;color:#4c4c4c;font-weight:normal;">6</div>
<div class="t" style="left:539.38px;top:470.75px;line-height:25.00px;font-size:13.32px;color:#4c4c4c;font-weight:normal;">131313@qq.com</div>
<div class="t" style="left:674.38px;top:470.75px;line-height:25.00px;font-size:13.32px;color:#4c4c4c;font-weight:normal;">测试跑</div>
<div class="t" style="left:776.88px;top:470.75px;line-height:25.00px;font-size:13.32px;color:#4c4c4c;font-weight:normal;">BTC/USDT<span style="font-size:11.25px;color:#8a8a8a">-30S</span></div>
<div class="t" style="left:922.50px;top:470.75px;line-height:25.00px;font-size:13.32px;color:#4c4c4c;font-weight:normal;">USDT</div>
<div class="t" style="left:780.50px;width:500.00px;text-align:center;top:473.50px;line-height:25.00px;font-size:14.00px;color:#1fa267;font-weight:bold;">涨<span style="display:inline-block;font-family:DejaVu Sans,sans-serif;font-weight:normal;font-size:1.1em;line-height:0;margin-left:-0.18em;transform:scaleY(1.45);transform-origin:50% 70%">↑</span></div>
<div class="b" style="left:1087.50px;top:475.00px;width:49.38px;height:18.25px;background:#eeeeee;border-radius:2.00px;"></div>
<div class="t" style="left:1094.75px;top:471.75px;line-height:25.00px;font-size:12.00px;color:#444;font-weight:normal;">已平仓</div>
<div class="t" style="right:1307.50px;top:470.75px;line-height:25.00px;font-size:13.32px;color:#4c4c4c;font-weight:normal;">1000</div>
<div class="t" style="right:1205.00px;top:470.75px;line-height:25.00px;font-size:13.32px;color:#4c4c4c;font-weight:normal;">0.20</div>
<div class="t" style="left:1387.25px;top:470.75px;line-height:25.00px;font-size:13.32px;color:#74d19e;font-weight:normal;">盈利</div>
<div class="b" style="left:1480.00px;top:474.75px;width:37.75px;height:19.00px;background:#009688;border-radius:2.00px;"></div>
<div class="t" style="left:1248.88px;width:500.00px;text-align:center;top:471.75px;line-height:25.00px;font-size:12.00px;color:#fff;font-weight:normal;">盈利</div>
<div class="t" style="right:924.12px;top:470.75px;line-height:25.00px;font-size:13.32px;color:#fa0a0a;font-weight:bold;">100</div>
<div class="t" style="left:1465.25px;width:500.00px;text-align:center;top:470.75px;line-height:25.00px;font-size:13.32px;color:#4c4c4c;font-weight:normal;">115562.2364</div>
<div class="t" style="left:1568.88px;width:500.00px;text-align:center;top:470.75px;line-height:25.00px;font-size:13.32px;color:#4c4c4c;font-weight:normal;">115563.0900</div>
<div class="t" style="left:1883.12px;top:470.75px;line-height:25.00px;font-size:13.32px;color:#4c4c4c;font-weight:normal;">2025-08-01 04:39:56</div>
<div class="b" style="left:287.75px;top:522.75px;width:18.75px;height:18.75px;background:#fff;border:1.12px solid #cfcfcf;border-radius:2.00px;box-sizing:border-box;"></div>
<div class="t" style="left:125.31px;width:500.00px;text-align:center;top:518.75px;line-height:25.00px;font-size:13.32px;color:#4c4c4c;font-weight:normal;">5</div>
<div class="t" style="left:437.50px;top:518.75px;line-height:25.00px;font-size:13.32px;color:#4c4c4c;font-weight:normal;">5</div>
<div class="t" style="left:539.38px;top:518.75px;line-height:25.00px;font-size:13.32px;color:#4c4c4c;font-weight:normal;">131313@qq.com</div>
<div class="t" style="left:674.38px;top:518.75px;line-height:25.00px;font-size:13.32px;color:#4c4c4c;font-weight:normal;">测试跑</div>
<div class="t" style="left:776.88px;top:518.75px;line-height:25.00px;font-size:13.32px;color:#4c4c4c;font-weight:normal;">BTC/USDT<span style="font-size:11.25px;color:#8a8a8a">-30S</span></div>
<div class="t" style="left:922.50px;top:518.75px;line-height:25.00px;font-size:13.32px;color:#4c4c4c;font-weight:normal;">USDT</div>
<div class="t" style="left:780.50px;width:500.00px;text-align:center;top:521.50px;line-height:25.00px;font-size:14.00px;color:#1fa267;font-weight:bold;">涨<span style="display:inline-block;font-family:DejaVu Sans,sans-serif;font-weight:normal;font-size:1.1em;line-height:0;margin-left:-0.18em;transform:scaleY(1.45);transform-origin:50% 70%">↑</span></div>
<div class="b" style="left:1087.50px;top:523.00px;width:49.38px;height:18.25px;background:#eeeeee;border-radius:2.00px;"></div>
<div class="t" style="left:1094.75px;top:519.75px;line-height:25.00px;font-size:12.00px;color:#444;font-weight:normal;">已平仓</div>
<div class="t" style="right:1307.50px;top:518.75px;line-height:25.00px;font-size:13.32px;color:#4c4c4c;font-weight:normal;">1000</div>
<div class="t" style="right:1205.00px;top:518.75px;line-height:25.00px;font-size:13.32px;color:#4c4c4c;font-weight:normal;">0.20</div>
<div class="t" style="left:1387.25px;top:518.75px;line-height:25.00px;font-size:13.32px;color:#74d19e;font-weight:normal;">盈利</div>
<div class="b" style="left:1480.00px;top:522.75px;width:37.75px;height:19.00px;background:#ff5722;border-radius:2.00px;"></div>
<div class="t" style="left:1248.88px;width:500.00px;text-align:center;top:519.75px;line-height:25.00px;font-size:12.00px;color:#fff;font-weight:normal;">亏损</div>
<div class="t" style="right:924.12px;top:518.75px;line-height:25.00px;font-size:13.32px;color:#4c4c4c;font-weight:normal;">-100</div>
<div class="t" style="left:1465.25px;width:500.00px;text-align:center;top:518.75px;line-height:25.00px;font-size:13.32px;color:#4c4c4c;font-weight:normal;">115606.4483</div>
<div class="t" style="left:1568.88px;width:500.00px;text-align:center;top:518.75px;line-height:25.00px;font-size:13.32px;color:#4c4c4c;font-weight:normal;">115553.0400</div>
<div class="t" style="left:1883.12px;top:518.75px;line-height:25.00px;font-size:13.32px;color:#4c4c4c;font-weight:normal;">2025-08-01 04:38:54</div>
<div class="b" style="left:287.75px;top:570.75px;width:18.75px;height:18.75px;background:#fff;border:1.12px solid #cfcfcf;border-radius:2.00px;box-sizing:border-box;"></div>
<div class="t" style="left:125.31px;width:500.00px;text-align:center;top:566.75px;line-height:25.00px;font-size:13.32px;color:#4c4c4c;font-weight:normal;">6</div>
<div class="t" style="left:437.50px;top:566.75px;line-height:25.00px;font-size:13.32px;color:#4c4c4c;font-weight:normal;">4</div>
<div class="t" style="left:539.38px;top:566.75px;line-height:25.00px;font-size:13.32px;color:#4c4c4c;font-weight:normal;">456456@qq.com</div>
<div class="t" style="left:674.38px;top:566.75px;line-height:25.00px;font-size:13.32px;color:#4c4c4c;font-weight:normal;">汉城源码...</div>
<div class="t" style="left:776.88px;top:566.75px;line-height:25.00px;font-size:13.32px;color:#4c4c4c;font-weight:normal;">ETH/USDT<span style="font-size:11.25px;color:#8a8a8a">-30S</span></div>
<div class="t" style="left:922.50px;top:566.75px;line-height:25.00px;font-size:13.32px;color:#4c4c4c;font-weight:normal;">USDT</div>
<div class="t" style="left:780.50px;width:500.00px;text-align:center;top:569.50px;line-height:25.00px;font-size:14.00px;color:#1fa267;font-weight:bold;">涨<span style="display:inline-block;font-family:DejaVu Sans,sans-serif;font-weight:normal;font-size:1.1em;line-height:0;margin-left:-0.18em;transform:scaleY(1.45);transform-origin:50% 70%">↑</span></div>
<div class="b" style="left:1087.50px;top:571.00px;width:49.38px;height:18.25px;background:#eeeeee;border-radius:2.00px;"></div>
<div class="t" style="left:1094.75px;top:567.75px;line-height:25.00px;font-size:12.00px;color:#444;font-weight:normal;">已平仓</div>
<div class="t" style="right:1307.50px;top:566.75px;line-height:25.00px;font-size:13.32px;color:#4c4c4c;font-weight:normal;">10000</div>
<div class="t" style="right:1205.00px;top:566.75px;line-height:25.00px;font-size:13.32px;color:#4c4c4c;font-weight:normal;">2.00</div>
<div class="t" style="left:1387.25px;top:566.75px;line-height:25.00px;font-size:13.32px;color:#74d19e;font-weight:normal;">盈利</div>
<div class="b" style="left:1480.00px;top:570.75px;width:37.75px;height:19.00px;background:#009688;border-radius:2.00px;"></div>
<div class="t" style="left:1248.88px;width:500.00px;text-align:center;top:567.75px;line-height:25.00px;font-size:12.00px;color:#fff;font-weight:normal;">盈利</div>
<div class="t" style="right:924.12px;top:566.75px;line-height:25.00px;font-size:13.32px;color:#fa0a0a;font-weight:bold;">1000</div>
<div class="t" style="left:1466.75px;width:500.00px;text-align:center;top:566.75px;line-height:25.00px;font-size:13.32px;color:#4c4c4c;font-weight:normal;">3690.8231</div>
<div class="t" style="left:1570.38px;width:500.00px;text-align:center;top:566.75px;line-height:25.00px;font-size:13.32px;color:#4c4c4c;font-weight:normal;">3691.0000</div>
<div class="t" style="left:1883.12px;top:566.75px;line-height:25.00px;font-size:13.32px;color:#4c4c4c;font-weight:normal;">2025-08-01 04:34:11</div>
<div class="b" style="left:287.75px;top:618.75px;width:18.75px;height:18.75px;background:#fff;border:1.12px solid #cfcfcf;border-radius:2.00px;box-sizing:border-box;"></div>
<div class="t" style="left:125.31px;width:500.00px;text-align:center;top:614.75px;line-height:25.00px;font-size:13.32px;color:#4c4c4c;font-weight:normal;">7</div>
<div class="t" style="left:437.50px;top:614.75px;line-height:25.00px;font-size:13.32px;color:#4c4c4c;font-weight:normal;">3</div>
<div class="t" style="left:539.38px;top:614.75px;line-height:25.00px;font-size:13.32px;color:#4c4c4c;font-weight:normal;">123123@qq.com</div>
<div class="t" style="left:674.38px;top:614.75px;line-height:25.00px;font-size:13.32px;color:#4c4c4c;font-weight:normal;">汉城源码...</div>
<div class="t" style="left:776.88px;top:614.75px;line-height:25.00px;font-size:13.32px;color:#4c4c4c;font-weight:normal;">ETH/USDT<span style="font-size:11.25px;color:#8a8a8a">-30S</span></div>
<div class="t" style="left:922.50px;top:614.75px;line-height:25.00px;font-size:13.32px;color:#4c4c4c;font-weight:normal;">USDT</div>
<div class="t" style="left:780.50px;width:500.00px;text-align:center;top:617.50px;line-height:25.00px;font-size:14.00px;color:#1fa267;font-weight:bold;">涨<span style="display:inline-block;font-family:DejaVu Sans,sans-serif;font-weight:normal;font-size:1.1em;line-height:0;margin-left:-0.18em;transform:scaleY(1.45);transform-origin:50% 70%">↑</span></div>
<div class="b" style="left:1087.50px;top:619.00px;width:49.38px;height:18.25px;background:#eeeeee;border-radius:2.00px;"></div>
<div class="t" style="left:1094.75px;top:615.75px;line-height:25.00px;font-size:12.00px;color:#444;font-weight:normal;">已平仓</div>
<div class="t" style="right:1307.50px;top:614.75px;line-height:25.00px;font-size:13.32px;color:#4c4c4c;font-weight:normal;">1000</div>
<div class="t" style="right:1205.00px;top:614.75px;line-height:25.00px;font-size:13.32px;color:#4c4c4c;font-weight:normal;">0.20</div>
<div class="t" style="left:1387.25px;top:614.75px;line-height:25.00px;font-size:13.32px;color:#74d19e;font-weight:normal;">盈利</div>
<div class="b" style="left:1480.00px;top:618.75px;width:37.75px;height:19.00px;background:#009688;border-radius:2.00px;"></div>
<div class="t" style="left:1248.88px;width:500.00px;text-align:center;top:615.75px;line-height:25.00px;font-size:12.00px;color:#fff;font-weight:normal;">盈利</div>
<div class="t" style="right:924.12px;top:614.75px;line-height:25.00px;font-size:13.32px;color:#fa0a0a;font-weight:bold;">100</div>
<div class="t" style="left:1466.75px;width:500.00px;text-align:center;top:614.75px;line-height:25.00px;font-size:13.32px;color:#4c4c4c;font-weight:normal;">3682.5242</div>
<div class="t" style="left:1570.38px;width:500.00px;text-align:center;top:614.75px;line-height:25.00px;font-size:13.32px;color:#4c4c4c;font-weight:normal;">3685.3500</div>
<div class="t" style="left:1883.12px;top:614.75px;line-height:25.00px;font-size:13.32px;color:#4c4c4c;font-weight:normal;">2025-08-01 04:24:43</div>
<div class="b" style="left:287.75px;top:666.75px;width:18.75px;height:18.75px;background:#fff;border:1.12px solid #cfcfcf;border-radius:2.00px;box-sizing:border-box;"></div>
<div class="t" style="left:125.31px;width:500.00px;text-align:center;top:662.75px;line-height:25.00px;font-size:13.32px;color:#4c4c4c;font-weight:normal;">8</div>
<div class="t" style="left:437.50px;top:662.75px;line-height:25.00px;font-size:13.32px;color:#4c4c4c;font-weight:normal;">2</div>
<div class="t" style="left:539.38px;top:662.75px;line-height:25.00px;font-size:13.32px;color:#4c4c4c;font-weight:normal;">cishi@qq.com</div>
<div class="t" style="left:674.38px;top:662.75px;line-height:25.00px;font-size:13.32px;color:#4c4c4c;font-weight:normal;">1</div>
<div class="t" style="left:776.88px;top:662.75px;line-height:25.00px;font-size:13.32px;color:#4c4c4c;font-weight:normal;">BTC/USDT<span style="font-size:11.25px;color:#8a8a8a">-60S</span></div>
<div class="t" style="left:922.50px;top:662.75px;line-height:25.00px;font-size:13.32px;color:#4c4c4c;font-weight:normal;">USDT</div>
<div class="t" style="left:780.50px;width:500.00px;text-align:center;top:665.50px;line-height:25.00px;font-size:14.00px;color:#1fa267;font-weight:bold;">涨<span style="display:inline-block;font-family:DejaVu Sans,sans-serif;font-weight:normal;font-size:1.1em;line-height:0;margin-left:-0.18em;transform:scaleY(1.45);transform-origin:50% 70%">↑</span></div>
<div class="b" style="left:1087.50px;top:667.00px;width:49.38px;height:18.25px;background:#eeeeee;border-radius:2.00px;"></div>
<div class="t" style="left:1094.75px;top:663.75px;line-height:25.00px;font-size:12.00px;color:#444;font-weight:normal;">已平仓</div>
<div class="t" style="right:1307.50px;top:662.75px;line-height:25.00px;font-size:13.32px;color:#4c4c4c;font-weight:normal;">1001</div>
<div class="t" style="right:1205.00px;top:662.75px;line-height:25.00px;font-size:13.32px;color:#4c4c4c;font-weight:normal;">0.20</div>
<div class="t" style="left:1387.25px;top:662.75px;line-height:25.00px;font-size:13.32px;color:#dc7676;font-weight:normal;">亏损</div>
<div class="b" style="left:1480.00px;top:666.75px;width:37.75px;height:19.00px;background:#ff5722;border-radius:2.00px;"></div>
<div class="t" style="left:1248.88px;width:500.00px;text-align:center;top:663.75px;line-height:25.00px;font-size:12.00px;color:#fff;font-weight:normal;">亏损</div>
<div class="t" style="right:924.12px;top:662.75px;line-height:25.00px;font-size:13.32px;color:#4c4c4c;font-weight:normal;">-150</div>
<div class="t" style="left:1465.25px;width:500.00px;text-align:center;top:662.75px;line-height:25.00px;font-size:13.32px;color:#4c4c4c;font-weight:normal;">118550.8505</div>
<div class="t" style="left:1568.88px;width:500.00px;text-align:center;top:662.75px;line-height:25.00px;font-size:13.32px;color:#4c4c4c;font-weight:normal;">118545.3500</div>
<div class="t" style="left:1883.12px;top:662.75px;line-height:25.00px;font-size:13.32px;color:#4c4c4c;font-weight:normal;">2025-07-31 04:47:26</div>
<div class="b" style="left:287.75px;top:714.75px;width:18.75px;height:18.75px;background:#fff;border:1.12px solid #cfcfcf;border-radius:2.00px;box-sizing:border-box;"></div>
<div class="t" style="left:125.31px;width:500.00px;text-align:center;top:710.75px;line-height:25.00px;font-size:13.32px;color:#4c4c4c;font-weight:normal;">9</div>
<div class="t" style="left:437.50px;top:710.75px;line-height:25.00px;font-size:13.32px;color:#4c4c4c;font-weight:normal;">1</div>
<div class="t" style="left:539.38px;top:710.75px;line-height:25.00px;font-size:13.32px;color:#4c4c4c;font-weight:normal;">cishi@qq.com</div>
<div class="t" style="left:674.38px;top:710.75px;line-height:25.00px;font-size:13.32px;color:#4c4c4c;font-weight:normal;">1</div>
<div class="t" style="left:776.88px;top:710.75px;line-height:25.00px;font-size:13.32px;color:#4c4c4c;font-weight:normal;">BTC/USDT<span style="font-size:11.25px;color:#8a8a8a">-60S</span></div>
<div class="t" style="left:922.50px;top:710.75px;line-height:25.00px;font-size:13.32px;color:#4c4c4c;font-weight:normal;">USDT</div>
<div class="t" style="left:780.50px;width:500.00px;text-align:center;top:713.50px;line-height:25.00px;font-size:14.00px;color:#1fa267;font-weight:bold;">涨<span style="display:inline-block;font-family:DejaVu Sans,sans-serif;font-weight:normal;font-size:1.1em;line-height:0;margin-left:-0.18em;transform:scaleY(1.45);transform-origin:50% 70%">↑</span></div>
<div class="b" style="left:1087.50px;top:715.00px;width:49.38px;height:18.25px;background:#eeeeee;border-radius:2.00px;"></div>
<div class="t" style="left:1094.75px;top:711.75px;line-height:25.00px;font-size:12.00px;color:#444;font-weight:normal;">已平仓</div>
<div class="t" style="right:1307.50px;top:710.75px;line-height:25.00px;font-size:13.32px;color:#4c4c4c;font-weight:normal;">1001</div>
<div class="t" style="right:1205.00px;top:710.75px;line-height:25.00px;font-size:13.32px;color:#4c4c4c;font-weight:normal;">0.20</div>
<div class="t" style="left:1387.25px;top:710.75px;line-height:25.00px;font-size:13.32px;color:#dc7676;font-weight:normal;">亏损</div>
<div class="b" style="left:1480.00px;top:714.75px;width:37.75px;height:19.00px;background:#009688;border-radius:2.00px;"></div>
<div class="t" style="left:1248.88px;width:500.00px;text-align:center;top:711.75px;line-height:25.00px;font-size:12.00px;color:#fff;font-weight:normal;">盈利</div>
<div class="t" style="right:924.12px;top:710.75px;line-height:25.00px;font-size:13.32px;color:#fa0a0a;font-weight:bold;">150</div>
<div class="t" style="left:1465.25px;width:500.00px;text-align:center;top:710.75px;line-height:25.00px;font-size:13.32px;color:#4c4c4c;font-weight:normal;">118535.5482</div>
<div class="t" style="left:1568.88px;width:500.00px;text-align:center;top:710.75px;line-height:25.00px;font-size:13.32px;color:#4c4c4c;font-weight:normal;">118545.3600</div>
<div class="t" style="left:1883.12px;top:710.75px;line-height:25.00px;font-size:13.32px;color:#4c4c4c;font-weight:normal;">2025-07-31 04:47:15</div>
<div class="b" style="left:265.62px;top:1212.50px;width:2309.38px;height:25.00px;background:#f2f2f2;"></div>
<div class="b" style="left:328.00px;top:1213.00px;width:1.50px;height:24.50px;background:#fafafa;"></div>
<div class="b" style="left:421.12px;top:1213.00px;width:1.50px;height:24.50px;background:#fafafa;"></div>
<div class="b" style="left:523.00px;top:1213.00px;width:1.50px;height:24.50px;background:#fafafa;"></div>
<div class="b" style="left:658.00px;top:1213.00px;width:1.50px;height:24.50px;background:#fafafa;"></div>
<div class="b" style="left:760.50px;top:1213.00px;width:1.50px;height:24.50px;background:#fafafa;"></div>
<div class="b" style="left:906.12px;top:1213.00px;width:1.50px;height:24.50px;background:#fafafa;"></div>
<div class="b" style="left:988.00px;top:1213.00px;width:1.50px;height:24.50px;background:#fafafa;"></div>
<div class="b" style="left:1070.50px;top:1213.00px;width:1.50px;height:24.50px;background:#fafafa;"></div>
<div class="b" style="left:1174.88px;top:1213.00px;width:1.50px;height:24.50px;background:#fafafa;"></div>
<div class="b" style="left:1268.00px;top:1213.00px;width:1.50px;height:24.50px;background:#fafafa;"></div>
<div class="b" style="left:1370.50px;top:1213.00px;width:1.50px;height:24.50px;background:#fafafa;"></div>
<div class="b" style="left:1463.00px;top:1213.00px;width:1.50px;height:24.50px;background:#fafafa;"></div>
<div class="b" style="left:1558.00px;top:1213.00px;width:1.50px;height:24.50px;background:#fafafa;"></div>
<div class="b" style="left:1660.75px;top:1213.00px;width:1.50px;height:24.50px;background:#fafafa;"></div>
<div class="b" style="left:1763.25px;top:1213.00px;width:1.50px;height:24.50px;background:#fafafa;"></div>
<div class="b" style="left:1868.00px;top:1213.00px;width:1.50px;height:24.50px;background:#fafafa;"></div>
<div class="b" style="left:2043.00px;top:1213.00px;width:1.50px;height:24.50px;background:#fafafa;"></div>
<div class="b" style="left:2146.12px;top:1213.00px;width:1.50px;height:24.50px;background:#fafafa;"></div>
</div></body></html>
